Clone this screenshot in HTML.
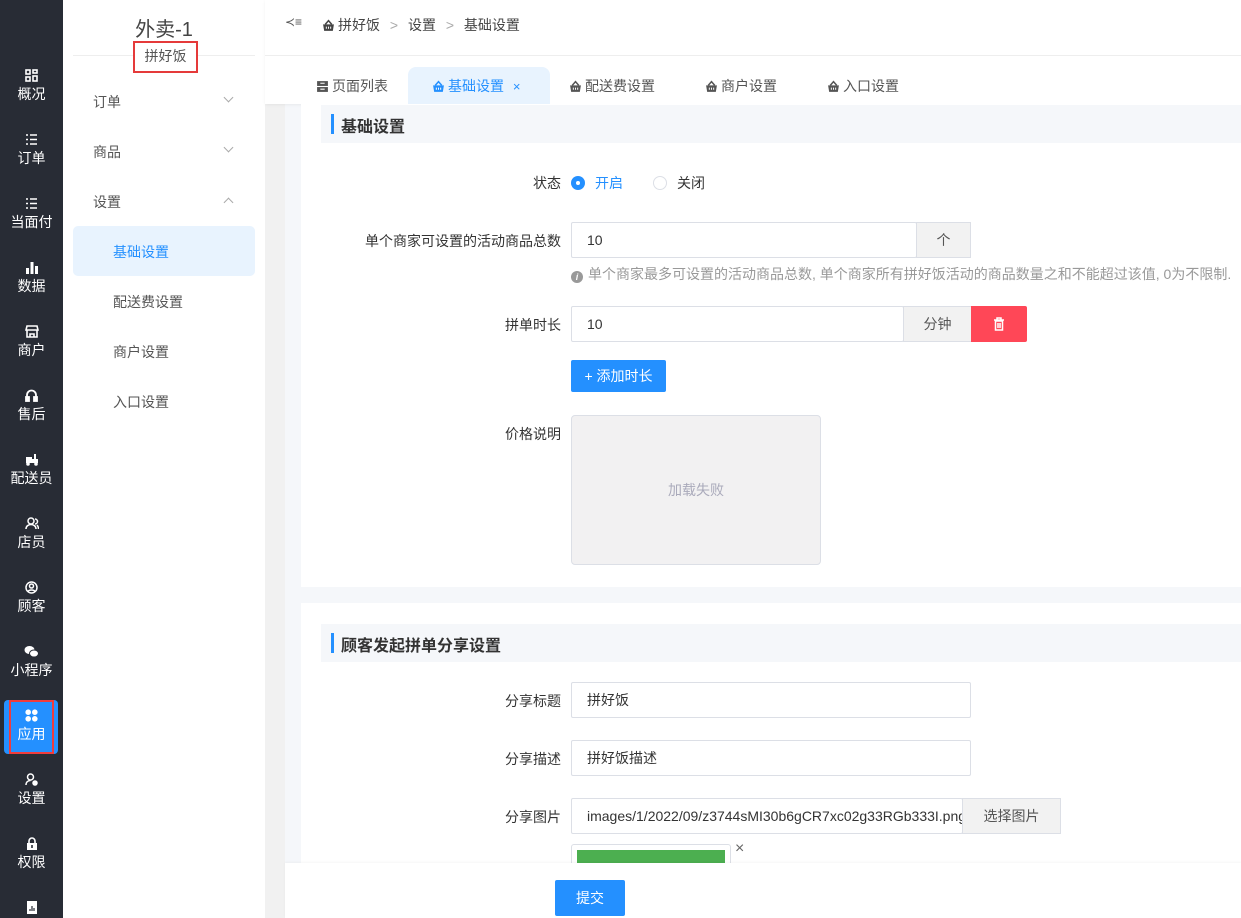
<!DOCTYPE html>
<html><head><meta charset="utf-8">
<style>
*{box-sizing:border-box;margin:0;padding:0}
body{width:1241px;height:918px;overflow:hidden;font-family:"Liberation Sans","Noto Sans CJK SC",sans-serif;font-size:14px;color:#333;background:#f5f7fa;position:relative}
.a{position:absolute}
.side{left:0;top:0;width:63px;height:918px;background:#282c35}
.si{position:absolute;left:0;width:63px;text-align:center;color:#fff;font-size:14px}
.si svg{display:block;margin:0 auto 2px}
.sub{left:63px;top:0;width:202px;height:918px;background:#fff}
.mi{position:absolute;left:30px;color:#555;font-size:14px}
.chev{position:absolute;left:162px;width:7px;height:7px;border-right:1px solid #aaa;border-bottom:1px solid #aaa}
.lbl{position:absolute;text-align:right;width:200px;font-size:14px;color:#333}
.inp{position:absolute;border:1px solid #dcdfe6;background:#fff;border-radius:2px;font-size:14px;padding-left:15px;color:#333}
.addon{position:absolute;background:#f2f2f2;border:1px solid #dcdfe6;text-align:center;color:#555;font-size:14px}
.sh{position:absolute;left:321px;width:920px;background:#f5f7fa;height:38px}
.sh b{position:absolute;left:10px;top:9px;width:3px;height:20px;background:#2490ff}
.sh span{position:absolute;left:20px;top:8px;font-size:16px;font-weight:bold;color:#333}
.tab{position:absolute;top:76px;font-size:14px;color:#555}
.tab svg,.bc svg{vertical-align:-2px;margin-right:3px}
</style></head><body>
<svg width="0" height="0" style="position:absolute"><defs>
<symbol id="bk" viewBox="0 0 12 12"><path d="M3 5 L6 1.5 L9 5" fill="none" stroke="currentColor" stroke-width="1.4"/><path d="M1 5h10l-1 6H2z" fill="currentColor"/><path d="M4 7v2M6 7v2M8 7v2" stroke="#fff" stroke-width="0.9"/></symbol>
</defs></svg>

<div class="a side">
 <div class="si" style="top:69px"><svg width="13" height="13" viewBox="0 0 13 13" fill="none" stroke="#fff" stroke-width="1.6"><rect x="1" y="1" width="4" height="4"/><rect x="8" y="1" width="4" height="3"/><rect x="1" y="8" width="4" height="4"/><rect x="8" y="7" width="4" height="5"/></svg>概况</div>
 <div class="si" style="top:133px"><svg width="13" height="13" viewBox="0 0 13 13" stroke="#fff" stroke-width="1.6"><path d="M1 2h2M5 2h7M1 6.5h2M5 6.5h7M1 11h2M5 11h7"/></svg>订单</div>
 <div class="si" style="top:197px"><svg width="13" height="13" viewBox="0 0 13 13" stroke="#fff" stroke-width="1.6"><path d="M1 2h2M5 2h7M1 6.5h2M5 6.5h7M1 11h2M5 11h7"/></svg>当面付</div>
 <div class="si" style="top:261px"><svg width="14" height="13" viewBox="0 0 14 13" fill="#fff"><rect x="1" y="7" width="3" height="6"/><rect x="5.5" y="1" width="3" height="12"/><rect x="10" y="5" width="3" height="8"/></svg>数据</div>
 <div class="si" style="top:325px"><svg width="14" height="13" viewBox="0 0 14 13" fill="none" stroke="#fff" stroke-width="1.6"><path d="M2 1h10l1 4H1z"/><path d="M2 5v7h10V5M5 12V9h4v3"/></svg>商户</div>
 <div class="si" style="top:389px"><svg width="13" height="13" viewBox="0 0 13 13" fill="none" stroke="#fff" stroke-width="1.8"><path d="M2 9V6a4.5 4.5 0 0 1 9 0v3"/><rect x="1" y="8" width="3" height="4" fill="#fff"/><rect x="9" y="8" width="3" height="4" fill="#fff"/></svg>售后</div>
 <div class="si" style="top:453px"><svg width="14" height="13" viewBox="0 0 14 13" fill="#fff"><rect x="1" y="4" width="6" height="6"/><rect x="7" y="6" width="6" height="4"/><rect x="9" y="1" width="2" height="5"/><circle cx="3" cy="11" r="1.8"/><circle cx="11" cy="11" r="1.8"/></svg>配送员</div>
 <div class="si" style="top:517px"><svg width="14" height="13" viewBox="0 0 14 13" fill="none" stroke="#fff" stroke-width="1.5"><circle cx="6" cy="4" r="3"/><path d="M1 12c0-3 2.5-4.5 5-4.5s5 1.5 5 4.5M10 2a2.5 2.5 0 0 1 0 5M12 8c1 1 1.5 2 1.5 4"/></svg>店员</div>
 <div class="si" style="top:581px"><svg width="13" height="13" viewBox="0 0 13 13" fill="none" stroke="#fff" stroke-width="1.5"><circle cx="6.5" cy="6.5" r="5.5"/><circle cx="6.5" cy="5" r="2"/><path d="M3 10.5c1-2 6-2 7 0"/></svg>顾客</div>
 <div class="si" style="top:645px"><svg width="15" height="13" viewBox="0 0 15 13" fill="#fff"><ellipse cx="5.5" cy="5" rx="5" ry="4"/><ellipse cx="10" cy="8.5" rx="4.5" ry="3.5" stroke="#282c35" stroke-width="1"/></svg>小程序</div>
 <div class="a" style="left:4px;top:700px;width:54px;height:54px;background:#2490ff;border-radius:4px"></div>
 <div class="a" style="left:9px;top:700px;width:45px;height:54px;border:2px solid #f03c3c"></div>
 <div class="si" style="top:709px"><svg width="13" height="13" viewBox="0 0 13 13" fill="#fff"><circle cx="3.2" cy="3.2" r="2.8"/><circle cx="9.8" cy="3.2" r="2.8"/><circle cx="3.2" cy="9.8" r="2.8"/><circle cx="9.8" cy="9.8" r="2.8"/></svg>应用</div>
 <div class="si" style="top:773px"><svg width="13" height="13" viewBox="0 0 13 13" fill="none" stroke="#fff" stroke-width="1.5"><circle cx="5.5" cy="4" r="3"/><path d="M1 12c0-3 2-4.5 4.5-4.5"/><circle cx="10" cy="10" r="2" fill="#fff"/></svg>设置</div>
 <div class="si" style="top:837px"><svg width="12" height="13" viewBox="0 0 12 13" fill="#fff"><path d="M3 6V4a3 3 0 0 1 6 0v2" fill="none" stroke="#fff" stroke-width="1.6"/><rect x="1" y="6" width="10" height="7"/><rect x="5.2" y="8" width="1.6" height="3" fill="#282c35"/></svg>权限</div>
 <div class="si" style="top:901px"><svg width="12" height="13" viewBox="0 0 12 13" fill="#fff"><rect x="1" y="0" width="10" height="13"/><path d="M4 10V8M6 10V5M8 10V7" stroke="#282c35" stroke-width="1.2"/></svg></div>
</div>

<div class="a sub">
 <div class="a" style="left:0;width:202px;top:13px;text-align:center;font-size:20px;color:#444">外卖-1</div>
 <div class="a" style="left:10px;top:55px;width:182px;height:1px;background:#eee"></div>
 <div class="a" style="left:70px;top:41px;width:65px;height:32px;border:2px solid #e53a3a;background:#fff;text-align:center;line-height:27px;font-size:14px;color:#555">拼好饭</div>
 <div class="mi" style="top:92px">订单</div><div class="chev" style="top:94px;transform:rotate(45deg)"></div>
 <div class="mi" style="top:142px">商品</div><div class="chev" style="top:144px;transform:rotate(45deg)"></div>
 <div class="mi" style="top:192px">设置</div><div class="chev" style="top:199px;transform:rotate(-135deg)"></div>
 <div class="a" style="left:10px;top:226px;width:182px;height:50px;background:#e8f3fe;border-radius:5px"></div>
 <div class="mi" style="left:50px;top:242px;color:#2490ff">基础设置</div>
 <div class="mi" style="left:50px;top:292px">配送费设置</div>
 <div class="mi" style="left:50px;top:342px">商户设置</div>
 <div class="mi" style="left:50px;top:392px">入口设置</div>
</div>

<div class="a" style="left:265px;top:0;width:20px;height:918px;background:#f1f1f1"></div>
<div class="a" style="left:265px;top:0;width:976px;height:104px;background:#fff;box-shadow:0 1px 3px rgba(0,0,0,.06)"></div>
<div class="a" style="left:265px;top:55px;width:976px;height:1px;background:#eee"></div>
<div class="a" style="left:285px;top:15px;font-size:12px;color:#555">&#8826;&#8801;</div>
<div class="a bc" style="left:322px;top:15px;color:#444;font-size:14px"><svg width="13" height="13" style="color:#444"><use href="#bk"/></svg>拼好饭 <span style="color:#aaa;margin:0 6px">&gt;</span> 设置 <span style="color:#aaa;margin:0 6px">&gt;</span> 基础设置</div>

<div class="a" style="left:408px;top:67px;width:142px;height:38px;background:#e8f3fe;border-radius:8px 8px 0 0"></div>
<div class="tab" style="left:316px"><svg width="13" height="13" viewBox="0 0 12 12" fill="#555"><rect x="1" y="1" width="10" height="4.5"/><rect x="1" y="6.5" width="10" height="4.5"/><path d="M4 3h4M4 8.5h4" stroke="#fff"/></svg>页面列表</div>
<div class="tab" style="left:432px;color:#2490ff"><svg width="13" height="13" style="color:#2490ff"><use href="#bk"/></svg>基础设置 <span style="margin-left:5px;font-size:13px">×</span></div>
<div class="tab" style="left:569px"><svg width="13" height="13" style="color:#555"><use href="#bk"/></svg>配送费设置</div>
<div class="tab" style="left:705px"><svg width="13" height="13" style="color:#555"><use href="#bk"/></svg>商户设置</div>
<div class="tab" style="left:827px"><svg width="13" height="13" style="color:#555"><use href="#bk"/></svg>入口设置</div>

<div class="a" style="left:301px;top:104px;width:940px;height:483px;background:#fff"></div>
<div class="a" style="left:301px;top:603px;width:940px;height:315px;background:#fff"></div>

<div class="sh" style="top:105px"><b></b><span>基础设置</span></div>
<div class="lbl" style="left:361px;top:173px">状态</div>
<div class="a" style="left:571px;top:176px;width:14px;height:14px;border-radius:50%;background:#2490ff"></div>
<div class="a" style="left:576px;top:181px;width:4px;height:4px;border-radius:50%;background:#fff"></div>
<div class="a" style="left:595px;top:173px;color:#2490ff">开启</div>
<div class="a" style="left:653px;top:176px;width:14px;height:14px;border-radius:50%;border:1px solid #dcdfe6"></div>
<div class="a" style="left:677px;top:173px">关闭</div>

<div class="lbl" style="left:361px;top:231px">单个商家可设置的活动商品总数</div>
<div class="inp" style="left:571px;top:222px;width:346px;height:36px;line-height:34px">10</div>
<div class="addon" style="left:916px;top:222px;width:55px;height:36px;line-height:34px">个</div>
<div class="a" style="left:571px;top:264px;color:#999;font-size:14px;white-space:nowrap"><span style="display:inline-block;width:12px;height:12px;border-radius:50%;background:#999;color:#fff;font-size:9px;text-align:center;line-height:12px;font-style:italic;font-weight:bold;margin-right:5px;vertical-align:-1px">i</span>单个商家最多可设置的活动商品总数, 单个商家所有拼好饭活动的商品数量之和不能超过该值, 0为不限制.</div>

<div class="lbl" style="left:361px;top:315px">拼单时长</div>
<div class="inp" style="left:571px;top:306px;width:333px;height:36px;line-height:34px">10</div>
<div class="addon" style="left:903px;top:306px;width:69px;height:36px;line-height:34px">分钟</div>
<div class="a" style="left:971px;top:306px;width:56px;height:36px;background:#ff4757;border-radius:0 2px 2px 0"><svg style="position:absolute;left:22px;top:11px" width="12" height="14" viewBox="0 0 12 14" fill="none" stroke="#fff" stroke-width="1.5"><path d="M1 3h10M4 3V1h4v2"/><rect x="2.5" y="4" width="7" height="9"/><path d="M5 6v5M7 6v5"/></svg></div>
<div class="a" style="left:571px;top:360px;width:95px;height:32px;background:#2490ff;border-radius:2px;color:#fff;text-align:center;line-height:32px;font-size:14px">+ 添加时长</div>

<div class="lbl" style="left:361px;top:424px">价格说明</div>
<div class="a" style="left:571px;top:415px;width:250px;height:150px;background:#f2f1f2;border:1px solid #dcdfe6;border-radius:4px;text-align:center;line-height:148px;color:#aab;font-size:14px">加载失败</div>

<div class="sh" style="top:624px"><b></b><span>顾客发起拼单分享设置</span></div>
<div class="lbl" style="left:361px;top:691px">分享标题</div>
<div class="inp" style="left:571px;top:682px;width:400px;height:36px;line-height:34px">拼好饭</div>
<div class="lbl" style="left:361px;top:749px">分享描述</div>
<div class="inp" style="left:571px;top:740px;width:400px;height:36px;line-height:34px">拼好饭描述</div>
<div class="lbl" style="left:361px;top:807px">分享图片</div>
<div class="inp" style="left:571px;top:798px;width:392px;height:36px;line-height:34px;overflow:hidden;white-space:nowrap;padding-right:15px">images/1/2022/09/z3744sMI30b6gCR7xc02g33RGb333I.png</div>
<div class="addon" style="left:962px;top:798px;width:99px;height:36px;line-height:34px">选择图片</div>
<div class="a" style="left:571px;top:844px;width:160px;height:40px;border:1px solid #dcdfe6;border-radius:3px;background:#fff"></div>
<div class="a" style="left:577px;top:850px;width:148px;height:30px;background:#4caf50"></div>
<div class="a" style="left:735px;top:840px;color:#666;font-size:16px">×</div>

<div class="a" style="left:285px;top:863px;width:956px;height:55px;background:#fff;box-shadow:0 -1px 2px rgba(0,0,0,.04)"></div>
<div class="a" style="left:555px;top:880px;width:70px;height:36px;background:#2490ff;border-radius:2px;color:#fff;text-align:center;line-height:36px;font-size:14px">提交</div>
</body></html>
